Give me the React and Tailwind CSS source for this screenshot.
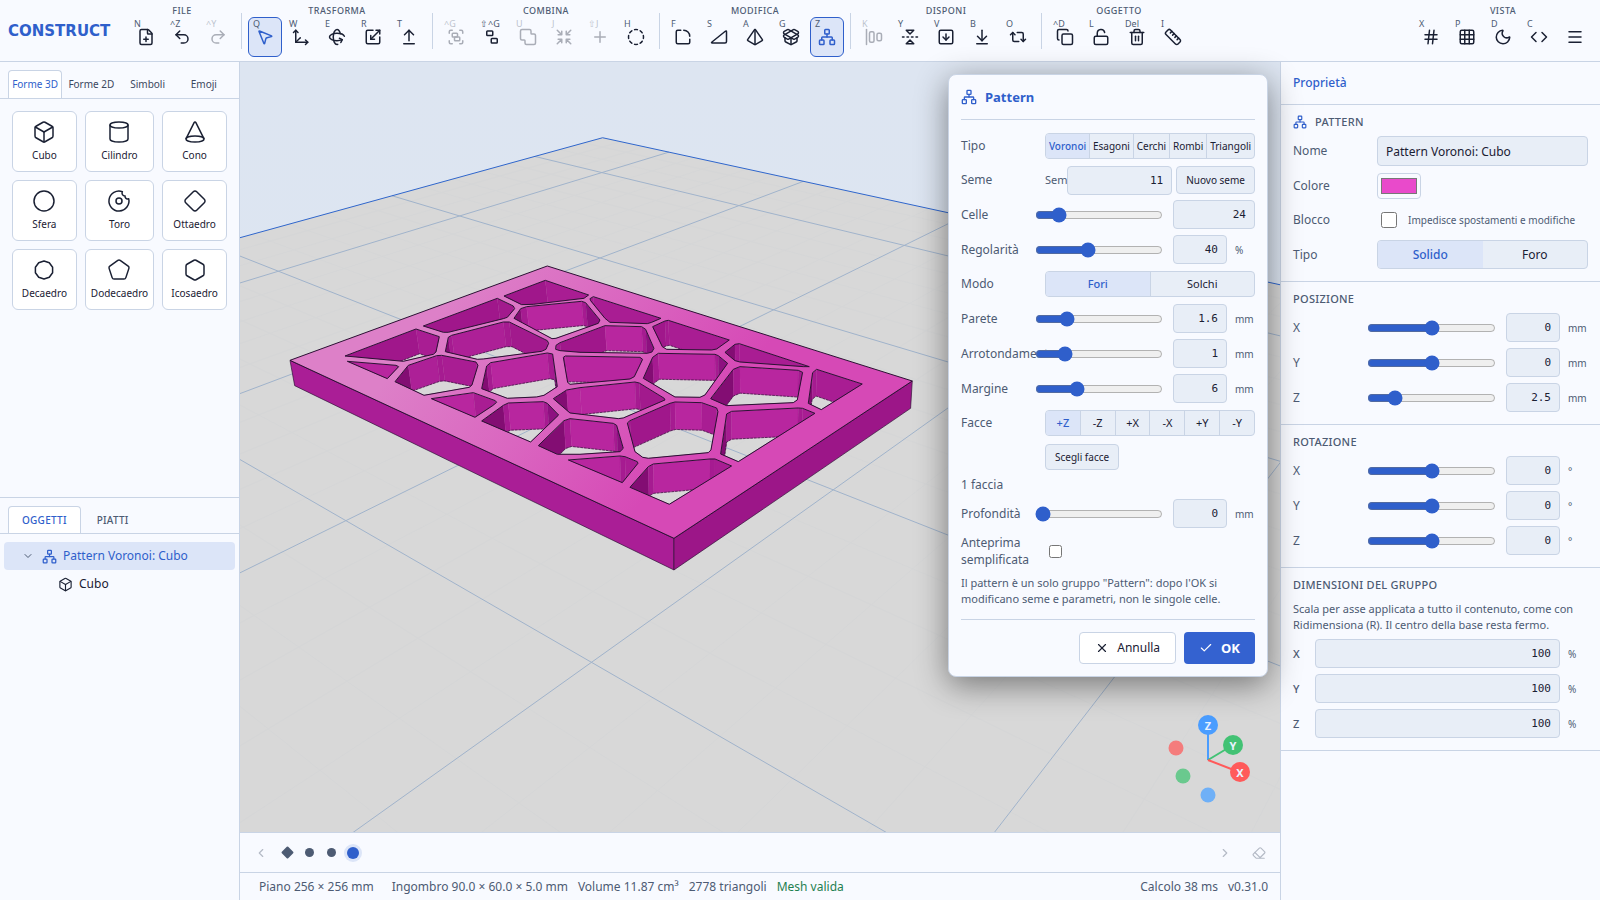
import { useState } from 'react'
import {
  FilePlus, Undo2, Redo2, MousePointer2, Move3d, Rotate3d, Scaling, ArrowUpFromLine, Group, Ungroup, SquaresUnite,
  Shrink, Plus, CircleDashed, SquareRoundCorner, TriangleRight, Pyramid, PackageOpen, Network, AlignHorizontalJustifyStart,
  FlipVertical2, SquareArrowDown, ArrowDownToLine, Repeat2, Copy, LockOpen, Trash2, Ruler, Hash, Grid3x3, Moon, Code, Menu,
  Box, Cylinder, Cone, Circle, Donut, Diamond, Pentagon, Hexagon, ChevronDown, ChevronLeft, ChevronRight, Eraser, X, Check,
} from 'lucide-react'

const GROUPS = [
  { label: 'File', items: [
    { k: 'N', icon: FilePlus, name: 'Nuovo' },
    { k: '^Z', icon: Undo2, name: 'Annulla' },
    { k: '^Y', icon: Redo2, name: 'Ripeti', off: true },
  ] },
  { label: 'Trasforma', items: [
    { k: 'Q', icon: MousePointer2, name: 'Seleziona', active: true },
    { k: 'W', icon: Move3d, name: 'Sposta' },
    { k: 'E', icon: Rotate3d, name: 'Ruota' },
    { k: 'R', icon: Scaling, name: 'Ridimensiona' },
    { k: 'T', icon: ArrowUpFromLine, name: 'Estrudi' },
  ] },
  { label: 'Combina', items: [
    { k: '^G', icon: Group, name: 'Raggruppa', off: true },
    { k: '⇧^G', icon: Ungroup, name: 'Separa' },
    { k: 'U', icon: SquaresUnite, name: 'Unisci', off: true },
    { k: 'J', icon: Shrink, name: 'Interseca', off: true },
    { k: '⇧J', icon: Plus, name: 'Aggiungi', off: true },
    { k: 'H', icon: CircleDashed, name: 'Foro' },
  ] },
  { label: 'Modifica', items: [
    { k: 'F', icon: SquareRoundCorner, name: 'Raccorda' },
    { k: 'S', icon: TriangleRight, name: 'Smussa' },
    { k: 'A', icon: Pyramid, name: 'Rastrema' },
    { k: 'G', icon: PackageOpen, name: 'Svuota' },
    { k: 'Z', icon: Network, name: 'Pattern', active: true },
  ] },
  { label: 'Disponi', items: [
    { k: 'K', icon: AlignHorizontalJustifyStart, name: 'Allinea', off: true },
    { k: 'Y', icon: FlipVertical2, name: 'Specchia' },
    { k: 'V', icon: SquareArrowDown, name: 'Appoggia faccia' },
    { k: 'B', icon: ArrowDownToLine, name: 'Al piano' },
    { k: 'O', icon: Repeat2, name: 'Ripeti in serie' },
  ] },
  { label: 'Oggetto', items: [
    { k: '^D', icon: Copy, name: 'Duplica' },
    { k: 'L', icon: LockOpen, name: 'Blocca' },
    { k: 'Del', icon: Trash2, name: 'Elimina' },
    { k: 'I', icon: Ruler, name: 'Misura' },
  ] },
]

const VISTA = { label: 'Vista', items: [
  { k: 'X', icon: Hash, name: 'Griglia' },
  { k: 'P', icon: Grid3x3, name: 'Piano' },
  { k: 'D', icon: Moon, name: 'Tema' },
  { k: 'C', icon: Code, name: 'Codice' },
  { k: '', icon: Menu, name: 'Menu' },
] }

function Decagon(props) {
  return (
    <svg viewBox="0 0 24 24" fill="none" stroke="currentColor" strokeLinejoin="round" width={props.size} height={props.size} strokeWidth={props.strokeWidth}>
      <path d="M12 3l5.3 1.7 3.3 4.5v5.6l-3.3 4.5L12 21l-5.3-1.7-3.3-4.5V9.200l3.300-4.500z" />
    </svg>
  )
}

const SHAPES = [
  { label: 'Cubo', icon: Box },
  { label: 'Cilindro', icon: Cylinder },
  { label: 'Cono', icon: Cone },
  { label: 'Sfera', icon: Circle },
  { label: 'Toro', icon: Donut },
  { label: 'Ottaedro', icon: Diamond },
  { label: 'Decaedro', icon: Decagon },
  { label: 'Dodecaedro', icon: Pentagon },
  { label: 'Icosaedro', icon: Hexagon },
]

/* ---------- Toolbar ---------- */

function ToolButton({ k, icon: Icon, name, active, off }) {
  return (
    <button aria-label={name} disabled={off}
      className={`relative w-[34px] h-10 rounded-md border flex items-center justify-center ${
        active ? 'border-[#2f5fcb] bg-[#dce5f8] text-[#2f5fcb]' : 'border-transparent text-[#1a2033]'
      } ${off ? 'opacity-35' : ''}`}>
      <span className="absolute left-1 top-0 text-[9px] leading-3 text-[#4d5b73]">{k}</span>
      <Icon size={18} />
    </button>
  )
}

function ToolGroup({ label, items }) {
  return (
    <div className="flex flex-col items-center">
      <span className="text-[9px] leading-3 h-3 tracking-wider uppercase font-medium text-[#4d5b73]">{label}</span>
      <div className="flex gap-[2px]">
        {items.map(i => <ToolButton key={i.name} {...i} />)}
      </div>
    </div>
  )
}

function Toolbar() {
  return (
    <header className="flex items-start h-[62px] shrink-0 border-b border-[#c9d4e5] bg-[#f8faff] px-2 pt-[5px]">
      <div className="w-[121px] shrink-0 pt-4 font-['DejaVu_Sans'] font-bold text-[15px] leading-5 text-[#2f5fcb]">CONSTRUCT</div>
      {GROUPS.map((g, i) => (
        <div key={g.label} className="flex">
          {i > 0 && <span className="w-px h-9 mx-[6px] mt-2 bg-[#c9d4e5]" />}
          <ToolGroup {...g} />
        </div>
      ))}
      <div className="ml-auto"><ToolGroup {...VISTA} /></div>
    </header>
  )
}

/* ---------- Left column ---------- */

function Sidebar() {
  return (
    <aside className="w-60 shrink-0 flex flex-col border-r border-[#c9d4e5] bg-[#f8faff]">
      <div className="h-[436px] border-b border-[#c9d4e5]">
        <div className="flex gap-[2px] px-2 pt-2 border-b border-[#c9d4e5] text-[10px] leading-4 text-[#3b475e]">
          {['Forme 3D', 'Forme 2D', 'Simboli', 'Emoji'].map((t, i) => (
            <button key={t} className={`flex-1 h-7 pb-px rounded-t border border-b-0 whitespace-nowrap ${
              i === 0 ? 'border-[#c9d4e5] bg-white text-[#2f5fcb]' : 'border-transparent'}`}>{t}</button>
          ))}
        </div>
        <div className="grid grid-cols-[1fr_1fr_1fr] gap-2 p-3">
          {SHAPES.map(({ label, icon: Icon }) => (
            <button key={label} className="flex flex-col items-center gap-1 px-[5px] py-2 rounded-md border border-[#c9d4e5] bg-white text-[10px] leading-[15px] text-[#1a2033]">
              <Icon size={24} strokeWidth={1.5} />
              {label}
            </button>
          ))}
        </div>
      </div>
      <div className="flex px-2 pt-2 border-b border-[#c9d4e5] text-[10px] leading-4 font-medium tracking-wide">
        <button className="h-[27px] px-[13px] rounded-t border border-b-0 border-[#c9d4e5] bg-white text-[#2f5fcb]">OGGETTI</button>
        <button className="h-[27px] px-4 text-[#4d5b73]">PIATTI</button>
      </div>
      <ul className="px-1 pt-2 text-[12px] leading-5">
        <li className="flex items-center h-7 pl-[18px] rounded bg-[#dce5f8] text-[#2f5fcb]">
          <ChevronDown size={12} className="mr-2 text-[#4d5b73]" />
          <Network size={15} className="mr-[6px]" />
          Pattern Voronoi: Cubo
        </li>
        <li className="flex items-center h-7 pl-[54px] text-[#1a2033]">
          <Box size={15} strokeWidth={1.8} className="mr-[6px]" />
          Cubo
        </li>
      </ul>
    </aside>
  )
}

/* ---------- 3D view ---------- */

// Build plate millimetres -> view pixels
function project(x, y) {
  const w = 1 - 0.002768 * x + 0.003497 * y
  return [(597.1 + 2.416 * x + 6.234 * y) / w, (396.8 + 0.505 * x - 0.656 * y) / w]
}

const EDGE = 128
const PLATE = [[-EDGE, -EDGE], [-EDGE, EDGE], [EDGE, EDGE], [EDGE, -EDGE]].map(p => project(...p))

function gridLines(step, skip) {
  const lines = []
  for (let v = -120; v <= 120; v += 10) {
    if (v % step !== 0 || (skip && v % skip === 0)) continue
    lines.push([...project(v, -EDGE), ...project(v, EDGE)], [...project(-EDGE, v), ...project(EDGE, v)])
  }
  return lines
}

const MINOR = gridLines(10, 50)
const MAJOR = gridLines(50)

// Openings on the top face; one unit is a third of a view pixel
const CELLS = [
  [[225, 348], [438, 267], [508, 290], [498, 336], [490, 343], [400, 364]],
  [[232, 364], [378, 376], [386, 380], [352, 416]],
  [[460, 258], [682, 175], [730, 198], [734, 206], [712, 232], [700, 236], [535, 277], [520, 277]],
  [[702, 168], [826, 121], [956, 165], [942, 175], [790, 193], [755, 194]],
  [[962, 182], [960, 176], [970, 170], [1173, 235], [1145, 247], [1132, 251], [1020, 247], [1005, 235]],
  [[732, 235], [752, 206], [770, 200], [935, 184], [947, 188], [990, 240], [985, 250], [858, 295], [846, 296]],
  [[526, 335], [535, 292], [545, 286], [700, 246], [718, 246], [832, 302], [836, 310], [828, 328], [815, 334], [640, 357], [622, 358]],
  [[375, 425], [415, 376], [500, 347], [515, 346], [618, 366], [624, 376], [606, 435], [598, 442], [462, 466]],
  [[484, 476], [610, 458], [676, 482], [680, 487], [668, 497], [615, 532]],
  [[635, 446], [650, 378], [662, 368], [832, 339], [848, 342], [862, 440], [822, 466], [800, 471], [712, 475]],
  [[857, 328], [858, 316], [870, 308], [1005, 257], [1115, 260], [1127, 268], [1152, 325], [1146, 336], [1132, 340], [930, 337], [870, 332]],
  [[880, 352], [886, 348], [1110, 352], [1118, 358], [1093, 410], [1080, 417], [900, 433], [893, 427]],
  [[850, 476], [890, 450], [930, 443], [1095, 426], [1108, 429], [1183, 475], [1185, 480], [1060, 534], [1045, 536], [900, 519]],
  [[635, 543], [700, 496], [715, 489], [820, 485], [832, 490], [866, 525], [782, 606]],
  [[805, 617], [882, 542], [900, 536], [1030, 550], [1040, 556], [1060, 625], [1050, 635], [930, 643], [862, 643]],
  [[895, 660], [1050, 648], [1065, 650], [1102, 665], [1104, 670], [1057, 728]],
  [[1080, 742], [1135, 680], [1150, 672], [1320, 657], [1335, 657], [1385, 678], [1198, 793]],
  [[1095, 635], [1072, 549], [1080, 542], [1200, 490], [1215, 486], [1295, 488], [1340, 504], [1344, 515], [1323, 630], [1315, 638], [1135, 655], [1118, 652]],
  [[1120, 415], [1148, 352], [1165, 340], [1335, 343], [1345, 347], [1373, 370], [1305, 465], [1290, 472], [1215, 471]],
  [[1148, 260], [1185, 243], [1195, 241], [1378, 300], [1340, 327], [1325, 330], [1190, 328], [1177, 320]],
  [[1365, 337], [1395, 313], [1408, 311], [1618, 380], [1600, 380], [1410, 366], [1395, 362]],
  [[1322, 476], [1390, 388], [1410, 380], [1585, 391], [1598, 397], [1582, 480], [1570, 488], [1370, 497]],
  [[1615, 490], [1628, 398], [1640, 388], [1777, 432], [1654, 509]],
  [[1352, 642], [1370, 522], [1385, 514], [1585, 504], [1598, 505], [1635, 520], [1405, 665]],
]

const str = pts => pts.map(p => p.join(',')).join(' ')

// Drops a point of the top face down to the plate
function drop([x, y]) {
  return [x + 16.5 - 0.00996 * x - 0.00492 * y, y + 64.9 + 0.00202 * x + 0.03103 * y]
}

function wallColor([x1, y1], [x2, y2]) {
  const dx = x2 - x1
  // rounded corners get a tone between their two walls
  if (Math.hypot(dx, y2 - y1) < 24) return '#a61b91'
  if (dx <= 4) return '#780a68'
  const s = (y2 - y1) / dx
  if (s < -0.5) return '#830d73'
  if (s < -0.35) return '#a0178b'
  if (s < -0.22) return '#ad2097'
  if (s < 0.15) return '#b8269f'
  if (s < 0.45) return '#a91d93'
  if (s < 0.8) return '#a21a8d'
  return '#8d1180'
}

function Cell({ pts, id }) {
  const low = pts.map(drop)
  return (
    <g>
      <clipPath id={id}><polygon points={str(pts)} /></clipPath>
      <g clipPath={`url(#${id})`}>
        {pts.map((p, i) => {
          const j = (i + 1) % pts.length
          const c = wallColor(p, pts[j])
          return <polygon key={i} points={str([p, pts[j], low[j], low[i]])} fill={c} stroke={c} strokeWidth="1" />
        })}
        <polygon points={str(low)} fill="none" stroke="#2b1033" strokeWidth="2" strokeDasharray="8 3" />
      </g>
      <polygon points={str(pts)} fill="none" stroke="#2b1033" strokeWidth="3" />
    </g>
  )
}

const TOP = [[60, 361], [832, 78], [1927, 423], [1212, 895]]

function Scene() {
  const face = [TOP, ...CELLS].map(p => `M${p.map(q => q.join(' ')).join('L')}Z`).join('')
  return (
    <svg viewBox="240 62 1040 770" preserveAspectRatio="xMidYMid slice" className="absolute inset-0 w-full h-full" aria-hidden="true">
      <defs>
        <linearGradient id="sky" x1="0" y1="0" x2="0" y2="1">
          <stop offset="0" stopColor="#dde5f1" />
          <stop offset="1" stopColor="#dbe5f2" />
        </linearGradient>
        <linearGradient id="face" gradientUnits="userSpaceOnUse" x1="600" y1="100" x2="1250" y2="620">
          <stop offset="0" stopColor="#dd80c8" />
          <stop offset="0.5" stopColor="#da66c0" />
          <stop offset="1" stopColor="#d649b6" />
        </linearGradient>
      </defs>
      <rect x="240" y="62" width="1040" height="770" fill="url(#sky)" />
      <polygon points={str(PLATE)} fill="#d8d8d8" />
      {MINOR.map((l, i) => <line key={i} x1={l[0]} y1={l[1]} x2={l[2]} y2={l[3]} stroke="#d5d6d7" strokeWidth="1" />)}
      {MAJOR.map((l, i) => <line key={i} x1={l[0]} y1={l[1]} x2={l[2]} y2={l[3]} stroke="#a0b3cb" strokeWidth="1" />)}
      <polygon points={str(PLATE)} fill="none" stroke="#2f66cc" strokeWidth="1" />
      <g transform="translate(270 240) scale(0.3333)" strokeLinejoin="round">
        <polygon points="60,361 1212,895 1212,990 74,437" fill="#aa1e96" stroke="#2b1033" strokeWidth="2" />
        <polygon points="1212,895 1927,423 1922,505 1212,990" fill="#9c1688" stroke="#2b1033" strokeWidth="2" />
        <path d={face} fill="url(#face)" fillRule="evenodd" />
        {CELLS.map((c, i) => <Cell key={i} id={`cell-${i}`} pts={c} />)}
        <polygon points={str(TOP)} fill="none" stroke="#2b1033" strokeWidth="3" />
      </g>
    </svg>
  )
}

function Gizmo() {
  return (
    <svg viewBox="0 0 100 100" width="100" height="100" className="absolute right-[22px] bottom-[22px]" fontFamily="Noto Sans, sans-serif" fontSize="11" fontWeight="700" textAnchor="middle" aria-label="Assi">
      <circle cx="18" cy="38" r="7.500" fill="#f47c7c" />
      <circle cx="25" cy="66" r="7.500" fill="#6ac98e" />
      <circle cx="50" cy="85" r="7.500" fill="#6fb0f7" />
      <g strokeWidth="2">
        <path d="M50 50V15" stroke="#4a9dff" />
        <path d="M50 50l25-15" stroke="#42c274" />
        <path d="M50 50l31 12" stroke="#ff5a5a" />
      </g>
      <circle cx="50" cy="15" r="10" fill="#4a9dff" />
      <circle cx="75" cy="35" r="10" fill="#42c274" />
      <circle cx="82" cy="62" r="10" fill="#ff5a5a" />
      <g fill="#e8f2ff">
        <text x="50" y="20">Z</text>
        <text x="75" y="40">Y</text>
        <text x="82" y="67">X</text>
      </g>
    </svg>
  )
}

/* ---------- Form pieces ---------- */

function Num({ id, value, label, className }) {
  return (
    <input id={id} type="text" aria-label={label} defaultValue={value}
      className={`h-[29px] rounded border border-[#c9d4e5] bg-[#e8eef7] px-2 text-right font-['DejaVu_Sans_Mono',monospace] text-[11px] leading-4 text-[#1a2033] ${className}`} />
  )
}

function SliderRow({ label, value, pos, unit, id }) {
  return (
    <div className="flex items-center h-[29px]">
      <label htmlFor={id} className="w-[74px] shrink-0">{label}</label>
      <input id={id} type="range" min="0" max="100" step="any" defaultValue={pos} className="flex-1 min-w-0 mr-[10px] accent-[#2f5fcb]" />
      <Num value={value} label={`${label} valore`} className={unit ? 'w-[54px]' : 'w-[82px]'} />
      {unit && <span className="w-5 ml-2 text-[10px]">{unit}</span>}
    </div>
  )
}

function Segmented({ options, divided, grow, className }) {
  const [sel, setSel] = useState(options[0])
  return (
    <div className={`flex flex-1 rounded border border-[#c9d4e5] bg-[#e8eef7] overflow-hidden text-[#1a2033] ${divided ? 'divide-x divide-[#c9d4e5]' : ''} ${className}`}>
      {options.map(o => (
        <button key={o} onClick={() => setSel(o)} aria-pressed={sel === o}
          className={`${grow ? 'grow' : 'flex-1'} text-center ${sel === o ? 'bg-[#dce5f8] text-[#2f5fcb] font-medium' : ''}`}>{o}</button>
      ))}
    </div>
  )
}

/* ---------- Pattern dialog ---------- */

function PatternDialog() {
  return (
    <section role="dialog" aria-label="Pattern"
      className="absolute top-3 right-3 z-10 w-80 rounded-lg border border-[#c9d4e5] bg-[#f8faff] px-3 pb-3 shadow-[0_8px_32px_rgba(0,0,0,0.45)] text-[12px] leading-4 text-[#4d5b73]">
      <h2 className="flex items-center gap-2 h-[45px] border-b border-[#c9d4e5] text-[13px] font-bold text-[#2f5fcb]">
        <Network size={16} />Pattern
      </h2>
      <div className="flex flex-col gap-[6px] pt-3">
        <div className="flex items-center h-7">
          <span className="w-[84px] shrink-0">Tipo</span>
          <Segmented divided grow options={['Voronoi', 'Esagoni', 'Cerchi', 'Rombi', 'Triangoli']} className="h-[26px] text-[10px]" />
        </div>
        <div className="flex items-center h-7">
          <span className="w-[84px] shrink-0">Seme</span>
          <label htmlFor="seme" className="w-[22px] shrink-0 text-[11px]">Seme</label>
          <Num id="seme" value="11" className="flex-1 min-w-0 mr-1" />
          <button className="h-7 px-[9px] rounded border border-[#c9d4e5] bg-[#e8eef7] text-[10px] text-[#1a2033] whitespace-nowrap">Nuovo seme</button>
        </div>
        <SliderRow id="celle" label="Celle" value="24" pos={14} />
        <SliderRow id="regolarita" label="Regolarità" value="40" pos={40} unit="%" />
        <div className="flex items-center h-7">
          <span className="w-[84px] shrink-0">Modo</span>
          <Segmented divided options={['Fori', 'Solchi']} className="h-[26px] text-[11px]" />
        </div>
        <SliderRow id="parete" label="Parete" value="1.6" pos={21} unit="mm" />
        <SliderRow id="arrotondamento" label="Arrotondamento" value="1" pos={20} unit="mm" />
        <SliderRow id="margine" label="Margine" value="6" pos={30} unit="mm" />
        <div className="flex items-center h-7">
          <span className="w-[84px] shrink-0">Facce</span>
          <Segmented divided options={['+Z', '-Z', '+X', '-X', '+Y', '-Y']} className="h-[26px] text-[11px]" />
        </div>
        <div className="flex items-center h-7 pl-[84px]">
          <button className="h-[26px] px-[9px] rounded border border-[#c9d4e5] bg-[#e8eef7] text-[10px] text-[#1a2033]">Scegli facce</button>
        </div>
        <p>1 faccia</p>
        <SliderRow id="profondita" label="Profondità" value="0" pos={0} unit="mm" />
        <div className="flex items-center">
          <label htmlFor="anteprima" className="w-[88px] leading-[17px]">Anteprima<br />semplificata</label>
          <input id="anteprima" type="checkbox" className="w-[13px] h-[13px]" />
        </div>
        <p className="pt-px text-[11px]">Il pattern è un solo gruppo "Pattern": dopo l'OK si<br />modificano seme e parametri, non le singole celle.</p>
      </div>
      <div className="flex justify-end gap-2 mt-3 pt-3 border-t border-[#c9d4e5] text-[12px]">
        <button className="flex items-center gap-2 h-8 px-[15px] rounded border border-[#c9d4e5] bg-white text-[#1a2033]"><X size={14} />Annulla</button>
        <button className="flex items-center gap-2 h-8 px-[15px] rounded bg-[#3462d0] text-white text-[13px] font-bold"><Check size={14} />OK</button>
      </div>
    </section>
  )
}

/* ---------- Right column ---------- */

function Section({ title, icon, children }) {
  return (
    <section className="px-3 pt-[9px] pb-3 border-b border-[#c9d4e5]">
      <h3 className="flex items-center gap-2 h-4 mb-[6px] text-[11px] leading-4 font-medium tracking-wide uppercase">{icon}{title}</h3>
      <div className="flex flex-col gap-[6px]">{children}</div>
    </section>
  )
}

function Properties() {
  return (
    <aside className="w-80 shrink-0 border-l border-[#c9d4e5] bg-[#f8faff] text-[12px] leading-4 text-[#4d5b73]">
      <h2 className="flex items-center h-[43px] px-3 border-b border-[#c9d4e5] text-[12px] font-medium text-[#2f5fcb]">Proprietà</h2>
      <Section title="Pattern" icon={<Network size={14} className="text-[#2f5fcb]" />}>
        <div className="flex items-center">
          <label htmlFor="nome" className="w-[84px]">Nome</label>
          <input id="nome" defaultValue="Pattern Voronoi: Cubo" className="flex-1 min-w-0 h-[30px] px-2 rounded border border-[#c9d4e5] bg-[#e8eef7] text-[12px] text-[#1a2033]" />
        </div>
        <div className="flex items-center h-7">
          <label htmlFor="colore" className="w-[84px]">Colore</label>
          <input id="colore" type="color" defaultValue="#e94acb" className="w-11 h-[26px] px-px rounded border border-[#c9d4e5] bg-[#f8faff]" />
        </div>
        <div className="flex items-center h-7">
          <span className="w-[88px] shrink-0">Blocco</span>
          <input id="blocco" type="checkbox" className="w-4 h-4 shrink-0" />
          <label htmlFor="blocco" className="ml-[11px] text-[10px] whitespace-nowrap">Impedisce spostamenti e modifiche</label>
        </div>
        <div className="flex items-center">
          <span className="w-[84px]">Tipo</span>
          <Segmented options={['Solido', 'Foro']} className="h-[29px]" />
        </div>
      </Section>
      <Section title="Posizione">
        <SliderRow id="px" label="X" value="0" pos={50} unit="mm" />
        <SliderRow id="py" label="Y" value="0" pos={50} unit="mm" />
        <SliderRow id="pz" label="Z" value="2.5" pos={18} unit="mm" />
      </Section>
      <Section title="Rotazione">
        <SliderRow id="rx" label="X" value="0" pos={50} unit="°" />
        <SliderRow id="ry" label="Y" value="0" pos={50} unit="°" />
        <SliderRow id="rz" label="Z" value="0" pos={50} unit="°" />
      </Section>
      <Section title="Dimensioni del gruppo">
        <p className="pt-[2px] text-[11px]">Scala per asse applicata a tutto il contenuto, come con Ridimensiona (R). Il centro della base resta fermo.</p>
        {['X', 'Y', 'Z'].map(a => (
          <div key={a} className="flex items-center">
            <label htmlFor={`scala-${a}`} className="w-[22px] text-[11px] font-medium">{a}</label>
            <Num id={`scala-${a}`} value="100" className="flex-1 min-w-0" />
            <span className="w-5 ml-2 text-[10px]">%</span>
          </div>
        ))}
      </Section>
    </aside>
  )
}

/* ---------- Timeline and status ---------- */

function Timeline() {
  return (
    <div className="flex items-center h-10 shrink-0 px-[14px] border-t border-[#c9d4e5] bg-[#f8faff]">
      <button aria-label="Indietro" className="text-[#b4bac6]"><ChevronLeft size={14} /></button>
      <div className="flex items-center ml-2">
        <button aria-label="Passo 1" className="w-[22px] flex justify-center"><span className="w-[9px] h-[9px] rounded-[1px] rotate-45 bg-[#4d5b73]" /></button>
        <button aria-label="Passo 2" className="w-[22px] flex justify-center"><span className="w-[9px] h-[9px] rounded-full bg-[#4d5b73]" /></button>
        <button aria-label="Passo 3" className="w-[22px] flex justify-center"><span className="w-[9px] h-[9px] rounded-full bg-[#4d5b73]" /></button>
        <button aria-label="Passo 4" className="w-[22px] flex justify-center"><span className="w-3 h-3 rounded-full bg-[#2f5fcb] ring-3 ring-[#dce5f8]" /></button>
      </div>
      <button aria-label="Avanti" className="ml-auto text-[#b4bac6]"><ChevronRight size={14} /></button>
      <button aria-label="Cancella cronologia" className="ml-5 text-[#b4bac6]"><Eraser size={14} /></button>
    </div>
  )
}

function StatusBar() {
  return (
    <footer className="flex items-center gap-[10px] h-7 shrink-0 pl-[19px] pr-3 border-t border-[#c9d4e5] bg-[#f8faff] text-[12px] leading-4 text-[#4d5b73]">
      <span className="mr-2">Piano 256 × 256 mm</span>
      <span>Ingombro 90.0 × 60.0 × 5.0 mm</span>
      <span>Volume 11.87 cm³</span>
      <span>2778 triangoli</span>
      <span className="text-[#1f8050]">Mesh valida</span>
      <span className="ml-auto">Calcolo 38 ms</span>
      <span>v0.31.0</span>
    </footer>
  )
}

export default function App() {
  return (
    <div className="flex flex-col h-screen font-['Noto_Sans',sans-serif] bg-[#f8faff]">
      <Toolbar />
      <div className="flex flex-1 min-h-0">
        <Sidebar />
        <main className="flex flex-col flex-1 min-w-0">
          <div className="relative flex-1 min-h-0">
            <Scene />
            <Gizmo />
            <PatternDialog />
          </div>
          <Timeline />
          <StatusBar />
        </main>
        <Properties />
      </div>
    </div>
  )
}
